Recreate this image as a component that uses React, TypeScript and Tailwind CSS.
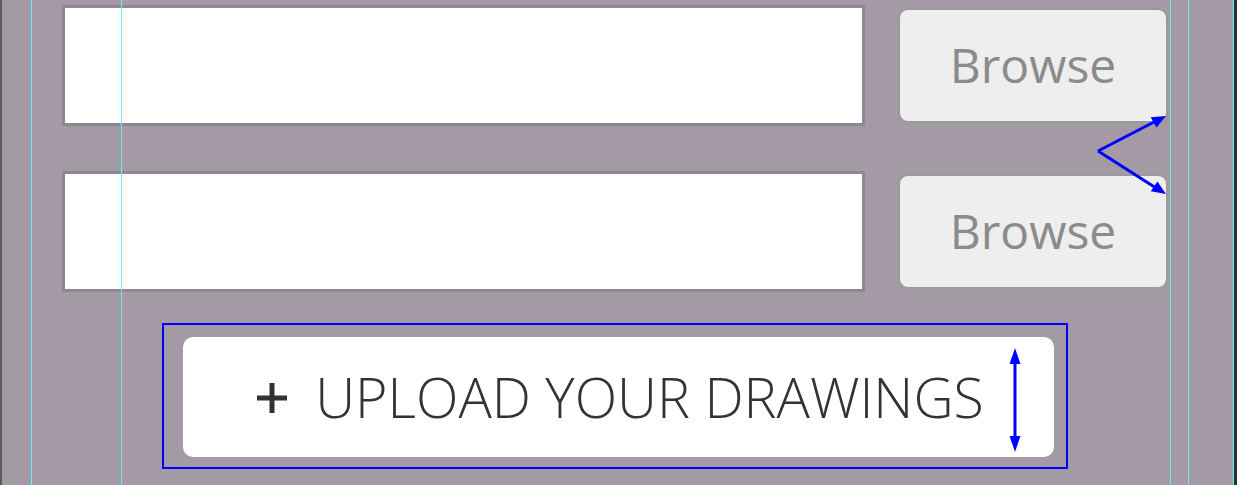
const guides = ['left-[31px]', 'left-[121px]', 'left-[1170px]', 'left-[1188px]', 'left-[1233px]'];

function FileRow({ className = '' }: { className?: string }) {
  return (
    <div className={`flex items-center gap-[33px] ${className}`}>
      <div className="h-[121px] w-[803px] border-[3px] border-[#8e8791] bg-white" />
      <button className="flex h-[115px] w-[270px] items-center justify-center rounded-[10px] border-2 border-[#9b999c] bg-[#eeeeee] pb-[2px] text-[48px] text-[#8b8b8b]">
        Browse
      </button>
    </div>
  );
}

export default function App() {
  return (
    <div className="relative flex h-[485px] w-[1237px] overflow-hidden bg-[#a39aa5] font-['Open_Sans',sans-serif]">
      <div className="w-[2px] shrink-0 bg-[#5e5a60]" />
      <div className="flex flex-1 flex-col pl-[60px] pt-[5px]">
        <FileRow />
        <FileRow className="mt-[45px]" />
        <div className="ml-[100px] mt-[31px] h-[146px] w-[906px] border-2 border-[#0000ff] pl-[19px] pt-[12px]">
          <button className="flex h-[120px] w-[871px] items-center justify-center gap-[28px] rounded-[10px] bg-white pl-[4px] text-[#333333]">
            <svg width="30" height="30" viewBox="0 0 30 30" className="mt-[1px] shrink-0">
              <path d="M15 0V30M0 15H30" stroke="currentColor" strokeWidth="5" />
            </svg>
            <span className="text-[55.5px] font-light leading-none">UPLOAD YOUR DRAWINGS</span>
          </button>
        </div>
      </div>
      <div className="w-[3px] shrink-0 bg-[#2b2e36]" />

      {guides.map((g) => (
        <div key={g} className={`pointer-events-none absolute top-0 h-full w-px bg-[#5ff1f6] ${g}`} />
      ))}

      <svg className="pointer-events-none absolute inset-0" width="1237" height="485">
        <g stroke="#0000ff" strokeWidth="3" fill="none">
          <line x1="1015" y1="358" x2="1015" y2="442" />
          <line x1="1098" y1="151" x2="1156" y2="121" />
          <line x1="1098" y1="151" x2="1156" y2="188" />
        </g>
        <g fill="#0000ff">
          <polygon points="1015,348 1009.5,364 1020.5,364" />
          <polygon points="1015,452 1009.5,436 1020.5,436" />
          <polygon points="1166,116 1156.5,127.5 1150.7,117.3" />
          <polygon points="1166,194 1150.8,191.3 1157.4,181.6" />
        </g>
      </svg>
    </div>
  );
}
